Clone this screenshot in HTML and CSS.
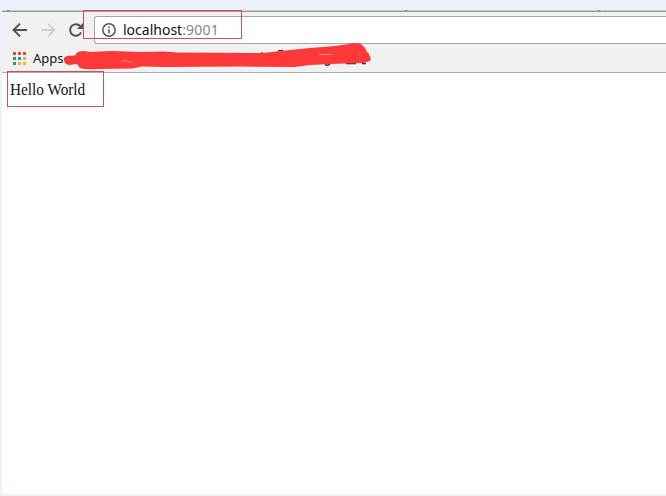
FILE: index.html
```html
<!DOCTYPE html>
<html lang="en">
<head>
<meta charset="utf-8">
<title>localhost:9001</title>
<link rel="stylesheet" href="styles.css">
</head>
<body>
<div class="window">
  <div class="tabstrip"></div>
  <header class="toolbar">
    <svg class="nav" viewBox="0 0 16 16"><path d="M15 8H2M8 1.6 1.6 8 8 14.4"/></svg>
    <svg class="nav forward" viewBox="0 0 16 16"><path d="M1 8h13M8 1.6 14.4 8 8 14.4"/></svg>
    <svg class="nav reload" viewBox="0 0 16 16"><path d="M13.2 10.4A5.8 5.8 0 1 1 12.2 4"/><path class="solid" d="M15 1v6H9z"/></svg>
    <div class="omnibox">
      <svg class="info" viewBox="0 0 14 14"><circle cx="7" cy="7" r="6.2"/><path d="M7 6.2v4.3M7 3.5v1.5"/></svg>
      <span class="url">localhost<span class="port">:9001</span></span>
    </div>
  </header>
  <nav class="bookmarks">
    <div class="apps"><i class="r"></i><i class="r"></i><i class="r"></i><i class="g"></i><i class="b"></i><i class="y"></i><i class="g"></i><i class="y"></i><i class="y"></i></div>
    <span>Apps</span>
  </nav>
  <main class="page"><p class="greeting">Hello World</p></main>
</div>
<svg class="marks" viewBox="0 0 666 496">
  <path class="tick" d="M404.5 10.5h3M597.5 10.5h3M7 10.5h3"/>
  <path class="ink" d="M76.500 54.500l3-2.500M278 51l5-.5M325 64.500q3 1.500 5-.5M346 63.500h10M362 63.500h4M367.500 53l1 3M261 53h2"/>
  <path class="scribble" d="M64 60C63 57 67 55 71 56L76 55C76 52 80 51 84 51L90 52 111 51 141 52 163 51.500 178 52.500 263 53 290 50 310 48 335 46 349 44Q356 42 361 44L365 48 368 54Q372 57 370 61L363 63 330 64 310 65 294 67 240 66.500 165 67 142 66.500 132 68.500 98 69Q81 70 79 67L77 64 69 65Q64 64 64 60Z"/>
  <path class="glint" d="M121 61.500l7-1M128 62h4M319 54.500h13M358 54.500h1"/>
  <rect class="box" x="83.500" y="10.500" width="158" height="28"/>
  <rect class="box" x="7.500" y="71.500" width="96" height="35"/>
</svg>
</body>
</html>
```
FILE: styles.css
```css
* { box-sizing: border-box; }
body { margin: 0; background: #edf2fa; overflow: hidden; }
.window { display: flex; flex-direction: column; height: 494px; margin-left: 2px; }
.tabstrip { height: 12px; flex: none; border-bottom: 1px solid #969799; box-shadow: inset 0 -1px #cccdd0; }
.toolbar { display: flex; align-items: center; height: 34px; flex: none; padding: 0 0 2px 10px; background: #f1f1f1; }
.nav { width: 16px; height: 16px; flex: none; margin: 3px 12px 0 0; fill: none; stroke: #515151; stroke-width: 2; }
.forward { stroke: #d0d0d0; }
.reload { margin-right: 10px; }
.solid { fill: #515151; stroke: none; }
.omnibox { display: flex; align-items: center; flex: 1; height: 28px; margin-top: 4px; padding-left: 7px; border: 1px solid #a5a5a5; border-right: 0; border-radius: 3px 0 0 3px; background: #fff; }
.info { width: 14px; height: 14px; flex: none; fill: none; stroke: #565656; stroke-width: 1.5; }
.url { margin-left: 7px; font: 14px/20px "Noto Sans", "Open Sans", sans-serif; color: #111; }
.port { color: #858585; letter-spacing: .2px; }
.bookmarks { display: flex; align-items: center; height: 27px; flex: none; padding: 0 0 2px 11px; border-bottom: 1px solid #adadad; background: #f1f1f1; font: 13px/20px "Noto Sans", "Open Sans", sans-serif; color: #111; }
.apps { display: grid; grid-template-columns: repeat(3, 3px); grid-auto-rows: 3px; gap: 2px; margin-right: 7px; }
.r { background: #df493c; }
.g { background: #2b9f61; }
.b { background: #3488e5; }
.y { background: #f1b521; }
.page { flex: 1; padding: 8px; background: #fff; }
.greeting { width: max-content; margin: 0; font: 16.500px/18px "Liberation Serif", serif; color: #111; transform: scaleX(.925); transform-origin: 0 0; }
.marks { position: absolute; inset: 0; width: 666px; height: 496px; }
.scribble { fill: #fc3838; }
.box { fill: none; stroke: #d15053; }
.ink { fill: none; stroke: #333; stroke-width: 1.500; }
.tick { stroke: #8b8c8e; }
.glint { stroke: #ffb0ac; stroke-width: .7; }
```
